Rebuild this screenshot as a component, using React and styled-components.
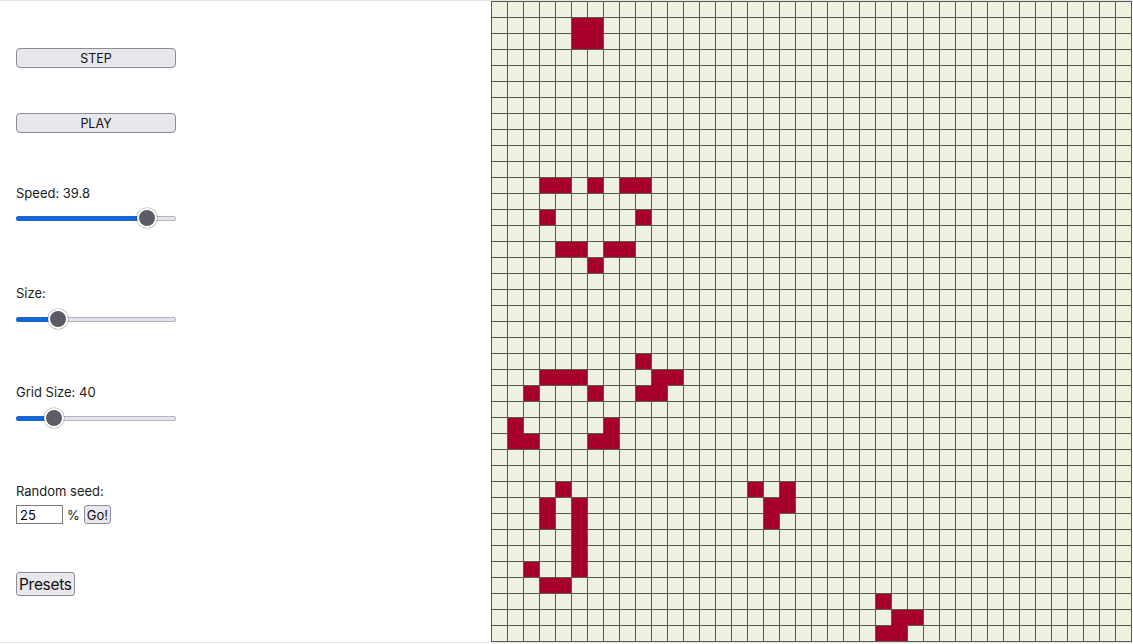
import React from "react";
import styled, { createGlobalStyle } from "styled-components";

const GlobalStyle = createGlobalStyle`
  html, body {
    margin: 0;
    padding: 0;
    background: #ffffff;
  }
  body {
    font-family: Inter, "Liberation Sans", Arial, sans-serif;
    color: #1b1b1b;
  }
`;

const COLS = 40;
const ROWS = 40;
const LINE = "#565a51";
const ALIVE = "#a8002c";

const LIVE = {
  1: [5, 6],
  2: [5, 6],
  11: [3, 4, 6, 8, 9],
  13: [3, 9],
  15: [4, 5, 7, 8],
  16: [6],
  22: [9],
  23: [3, 4, 5, 10, 11],
  24: [2, 6, 9, 10],
  26: [1, 7],
  27: [1, 2, 6, 7],
  30: [4, 16, 18],
  31: [3, 5, 17, 18],
  32: [3, 5, 17],
  33: [5],
  34: [5],
  35: [2, 5],
  36: [3, 4],
  37: [24],
  38: [25, 26],
  39: [24, 25],
};

const isLive = (r, c) => (LIVE[r] || []).includes(c);

const Page = styled.div`
  display: flex;
  align-items: flex-start;
  border-top: 1px solid #e4e4e4;
  border-bottom: 1px solid #e4e4e4;
`;

const Controls = styled.div`
  width: 475px;
  padding: 47px 0 0 16px;
  display: flex;
  flex-direction: column;
  align-items: flex-start;
`;

const WideButton = styled.button`
  width: 160px;
  height: 20px;
  margin: 0;
  margin-top: ${(p) => p.$gap || 0}px;
  padding: 0;
  font-family: inherit;
  font-size: 12.5px;
  font-weight: 400;
  color: #111;
  background: #e8e7ec;
  border: 1px solid #8d8c98;
  border-radius: 4px;
`;

const Label = styled.div`
  margin-top: ${(p) => p.$gap || 0}px;
  font-size: 13px;
  line-height: 16px;
  height: 16px;
`;

const Range = styled.input.attrs({ type: "range" })`
  -webkit-appearance: none;
  appearance: none;
  width: 160px;
  height: 20px;
  margin: ${(p) => p.$gap}px 0 0 0;
  padding: 0;
  background: transparent;

  &::-webkit-slider-runnable-track {
    height: 5px;
    border-radius: 3px;
    background: linear-gradient(
      to right,
      #0b68e3 var(--fill),
      #e4e4ea var(--fill)
    );
    box-shadow: inset 0 0 0 1px rgba(90, 90, 110, 0.35);
  }

  &::-webkit-slider-thumb {
    -webkit-appearance: none;
    appearance: none;
    width: 20px;
    height: 20px;
    margin-top: -7.5px;
    border-radius: 50%;
    background: #5c5c67;
    border: 2px solid #ffffff;
    box-sizing: border-box;
    box-shadow: 0 0 1px 0.5px rgba(0, 0, 0, 0.35);
  }
`;

const SeedRow = styled.div`
  margin-top: 6px;
  display: flex;
  align-items: center;
  gap: 4px;
  font-size: 13px;
`;

const SeedInput = styled.input`
  width: 47px;
  height: 19px;
  box-sizing: border-box;
  margin: 0;
  padding: 0 3px;
  font-family: inherit;
  font-size: 13px;
  border: 1px solid #7a7a7a;
  border-radius: 0;
`;

const SmallButton = styled.button`
  margin: 0;
  margin-top: ${(p) => p.$gap || 0}px;
  padding: 0 2px;
  height: ${(p) => (p.$big ? 24 : 19)}px;
  font-family: inherit;
  font-size: ${(p) => (p.$big ? 15.5 : 13)}px;
  letter-spacing: ${(p) => (p.$big ? "-0.3px" : "0")};
  color: #111;
  background: #e8e7ec;
  border: 1px solid #8d8c98;
  border-radius: 3px;
`;

const Board = styled.div`
  display: grid;
  grid-template-columns: repeat(${COLS}, 16px);
  grid-auto-rows: 16px;
  border-right: 1px solid ${LINE};
  border-bottom: 1px solid ${LINE};
`;

const Cell = styled.div`
  box-sizing: border-box;
  width: 16px;
  height: 16px;
  background: ${(p) => (p.$live ? ALIVE : "#eff2e0")};
  border-left: 1px solid ${(p) => (p.$joinLeft ? ALIVE : LINE)};
  border-top: 1px solid ${(p) => (p.$joinTop ? ALIVE : LINE)};
`;

const Slider = ({ value, gap = 8 }) => (
  <Range
    readOnly
    $gap={gap}
    min={0}
    max={1000}
    value={Math.round(value * 1000)}
    style={{ "--fill": `${10 + value * 140}px` }}
  />
);

const Grid = () => {
  const cells = [];
  for (let r = 0; r < ROWS; r++) {
    for (let c = 0; c < COLS; c++) {
      const live = isLive(r, c);
      cells.push(
        <Cell
          key={`${r}-${c}`}
          $live={live}
          $joinLeft={live && isLive(r, c - 1)}
          $joinTop={live && isLive(r - 1, c)}
        />
      );
    }
  }
  return <Board>{cells}</Board>;
};

const App = () => {
  return (
    <>
      <GlobalStyle />
      <Page>
        <Controls>
          <WideButton>STEP</WideButton>
          <WideButton $gap={45}>PLAY</WideButton>

          <Label $gap={52}>Speed: 39.8</Label>
          <Slider value={0.864} gap={7} />

          <Label $gap={57}>Size:</Label>
          <Slider value={0.229} />

          <Label $gap={55}>Grid Size: 40</Label>
          <Slider value={0.2} />

          <Label $gap={55}>Random seed:</Label>
          <SeedRow>
            <SeedInput defaultValue="25" />
            <span>%</span>
            <SmallButton>Go!</SmallButton>
          </SeedRow>

          <SmallButton $big $gap={48}>Presets</SmallButton>
        </Controls>
        <Grid />
      </Page>
    </>
  );
};

export default App;
